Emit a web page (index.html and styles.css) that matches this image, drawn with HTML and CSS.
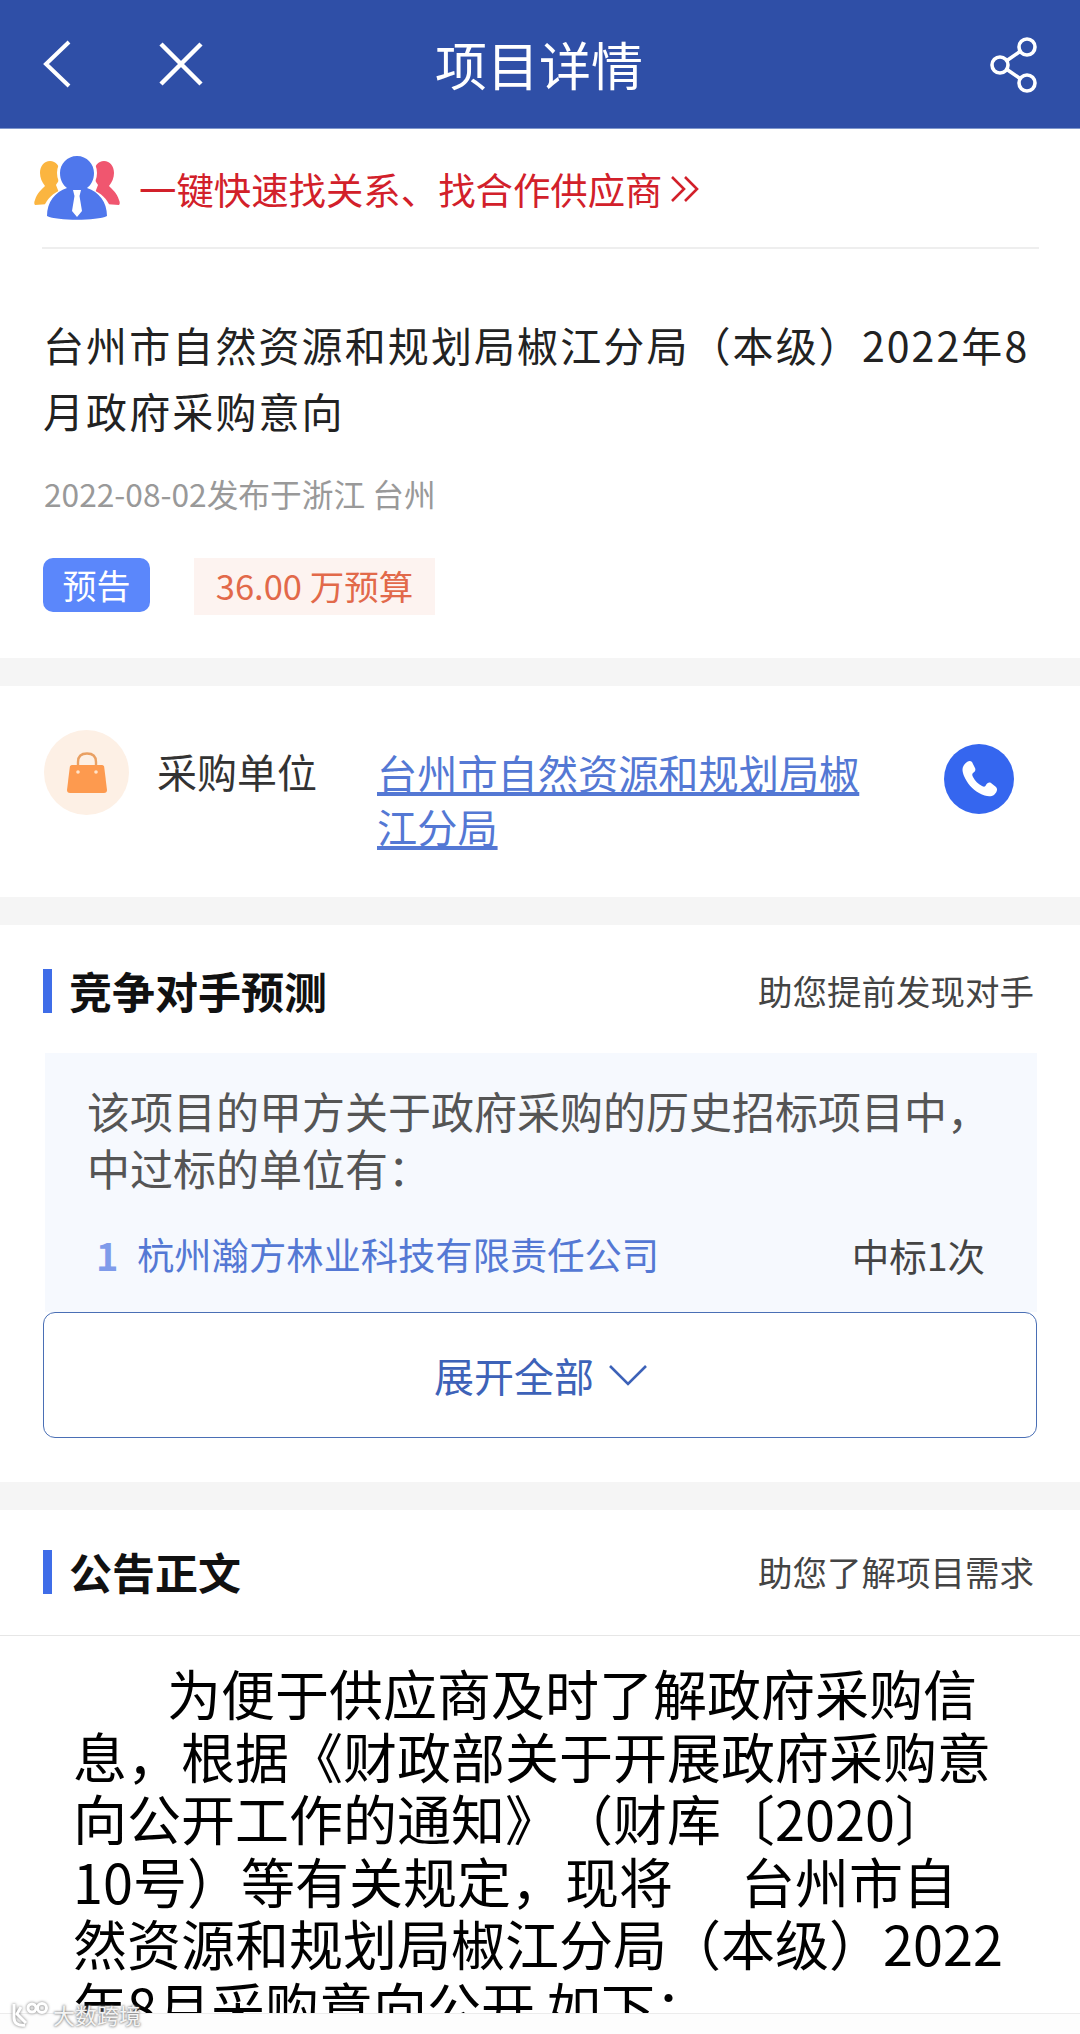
FILE: index.html
```html
<!DOCTYPE html>
<html lang="zh-CN">
<head>
  <meta charset="UTF-8">
  <meta name="viewport" content="width=device-width, initial-scale=1.0">
  <title>项目详情</title>
  <link rel="stylesheet" href="styles.css">
</head>
<body>

  <div class="page">
    <!-- Top bar -->
    <header class="topbar">
      <div class="topbar-left">
        <svg class="icon-back" viewBox="0 0 28 48" width="28" height="48"><path d="M26 2 L3 24 L26 46" fill="none" stroke="#fff" stroke-width="4"/></svg>
        <svg class="icon-close" viewBox="0 0 44 44" width="44" height="44"><path d="M2 2 L42 42 M42 2 L2 42" fill="none" stroke="#fff" stroke-width="4.5"/></svg>
      </div>
      <div class="topbar-title">项目详情</div>
      <svg class="icon-share" viewBox="0 0 50 56" width="50" height="56"><g fill="none" stroke="#fff" stroke-width="3.6"><circle cx="38" cy="10" r="8"/><circle cx="11" cy="28" r="8"/><circle cx="38" cy="46" r="8"/><path d="M31 14.5 L18 23.5 M18 32.5 L31 41.5"/></g></svg>
    </header>

    <main class="content">
      <!-- Promo and project info -->
      <section class="panel info-panel">
        <div class="promo">
          <svg class="icon-people" viewBox="0 0 90 68" width="90" height="68">
            <path d="M17 6 C23 6 27 11 27 18 C27 24 25 27 23 30 L30 48 L2 50 C1 49 1 47 2 45 C4 38 9 34 12 31 C9 27 7 23 7 18 C7 11 11 6 17 6 Z" fill="#fbb540"/>
            <path d="M71 6 C65 6 61 11 61 18 C61 24 63 27 65 30 L58 48 L86 50 C87 49 87 47 86 45 C84 38 79 34 76 31 C79 27 81 23 81 18 C81 11 77 6 71 6 Z" fill="#f0566f"/>
            <ellipse cx="44" cy="18" rx="20" ry="20" fill="#fff"/>
            <path d="M8 66 C8 46 22 32 44 32 C66 32 80 46 80 66 Z" fill="#fff"/>
            <path d="M44 1 C54 1 61 9 61 18 C61 25 58 30 54 33 C66 37 74 47 74 61 C64 66 24 66 14 61 C14 47 22 37 34 33 C30 30 27 25 27 18 C27 9 34 1 44 1 Z" fill="#4f77ec"/>
            <path d="M40 35 H48 L46.5 41 L49 56 L44 62 L39 56 L41.5 41 Z" fill="#fff"/>
          </svg>
          <span class="promo-text">一键快速找关系、找合作供应商</span>
          <svg class="icon-more" viewBox="0 0 32 30" width="32" height="30"><path d="M3 3 L15 15 L3 27 M16 3 L28 15 L16 27" fill="none" stroke="#d2202a" stroke-width="2.6"/></svg>
        </div>
        <h1 class="project-title">台州市自然资源和规划局椒江分局（本级）2022年8月政府采购意向</h1>
        <div class="project-date">2022-08-02发布于浙江 台州</div>
        <div class="tags">
          <span class="tag-notice">预告</span>
          <span class="tag-budget">36.00 万预算</span>
        </div>
      </section>

      <!-- Buyer -->
      <section class="panel buyer-panel">
        <div class="buyer-icon">
          <svg viewBox="0 0 42 42" width="42" height="42">
            <path d="M12 14 V10 C12 4 16 1.5 21 1.5 C26 1.5 30 4 30 10 V14" fill="none" stroke="#e9a063" stroke-width="2.4"/>
            <path d="M6 13 H36 C37.5 13 38 14 38.2 15 L41 38 C41 40 40 41 38 41 H4 C2 41 1 40 1 38 L3.8 15 C4 14 4.5 13 6 13 Z" fill="#fd9a4f"/>
            <circle cx="12" cy="20" r="1.8" fill="#ffe3c9"/>
            <circle cx="30" cy="20" r="1.8" fill="#ffe3c9"/>
          </svg>
        </div>
        <div class="buyer-label">采购单位</div>
        <a class="buyer-name">台州市自然资源和规划局椒江分局</a>
        <div class="phone-btn">
          <svg viewBox="0 0 40 40" width="40" height="40"><path d="M5 6 C8 2 11 1 13 3 L16 9 C17 11 16 13 14 14 C13 15 13 16 14 18 C16 22 19 25 23 27 C25 28 26 28 27 26 C28 24 30 23 32 24 L37 28 C39 30 38 33 35 36 C32 38 27 38 20 34 C13 30 8 24 5 17 C3 12 3 9 5 6 Z" fill="#fff"/></svg>
        </div>
      </section>

      <!-- Competitors -->
      <section class="panel rival-panel">
        <div class="section-head">
          <h2 class="section-title">竞争对手预测</h2>
          <span class="section-note">助您提前发现对手</span>
        </div>
        <div class="rival-card">
          <p class="rival-intro">该项目的甲方关于政府采购的历史招标项目中，中过标的单位有：</p>
          <div class="rival-row">
            <span class="rival-rank">1</span>
            <span class="rival-name">杭州瀚方林业科技有限责任公司</span>
            <span class="rival-count">中标1次</span>
          </div>
        </div>
        <div class="expand-btn">
          <span>展开全部</span>
          <svg viewBox="0 0 40 22" width="40" height="22"><path d="M2 2 L20 20 L38 2" fill="none" stroke="#3d62b8" stroke-width="2.6"/></svg>
        </div>
      </section>

      <!-- Notice body -->
      <section class="panel notice-panel">
        <div class="section-head notice-head">
          <h2 class="section-title">公告正文</h2>
          <span class="section-note">助您了解项目需求</span>
        </div>
        <div class="notice-body">为便于供应商及时了解政府采购信息，根据《财政部关于开展政府采购意向公开工作的通知》（财库〔2020〕<span class="no-break">10号</span>）等有关规定，现将<span class="text-gap"></span>台州市自然资源和规划局椒江分局（本级）2022年8月采购意向公开 如下：</div>
      </section>
    </main>

    <div class="bottom-strip"></div>
  </div>

  <!-- Screenshot watermark -->
  <div class="watermark">
    <svg viewBox="0 0 38 26" width="38" height="26"><g fill="none" stroke="#fff" stroke-width="3"><path d="M4 3 V17 C4 22 8 25 15 24"/><path d="M11 6 L7 13 L16 22"/><circle cx="22" cy="7" r="4"/><circle cx="32" cy="7" r="4.5"/></g></svg>
    <span>大数跨境</span>
  </div>

</body>
</html>
```

FILE: styles.css
```css
* {
  box-sizing: border-box;
}
html, body {
  margin: 0;
  height: 2034px;
  overflow: hidden;
}
body {
  font-family: "Noto Sans CJK SC", "Noto Sans", sans-serif;
  background: #f5f5f5;
  color: #111;
  text-spacing-trim: space-all;
}
.page {
  height: 2034px;
  display: flex;
  flex-direction: column;
}

/* Top bar */
.topbar {
  flex: none;
  height: 129px;
  background: #2f4fa7;
  border-bottom: 1px solid #7f97cc;
  display: flex;
  align-items: center;
  justify-content: space-between;
  padding: 0 41px 0 43px;
  position: relative;
}
.topbar-left {
  display: flex;
  align-items: center;
  gap: 88px;
}
.topbar-title {
  position: absolute;
  left: 0;
  right: 2px;
  text-align: center;
  color: #fff;
  font-size: 52px;
  line-height: 126px;
}
.icon-share {
  margin-top: 2px;
}

/* Panels */
.content {
  flex: 1;
  min-height: 0;
  overflow: hidden;
}
.panel {
  background: #fff;
  margin-bottom: 28px;
}
.info-panel {
  height: 529px;
  padding: 0 41px 0 42px;
}
.promo {
  height: 120px;
  border-bottom: 2px solid #eee;
  display: flex;
  align-items: center;
  padding-top: 2px;
}
.promo .icon-people {
  margin: 0 16px 0 -9px;
}
.promo-text {
  color: #d2202a;
  font-size: 37.4px;
}
.icon-more {
  margin-left: 7px;
}
.project-title {
  margin: 62px 0 0 1px;
  font-size: 41px;
  font-weight: 400;
  line-height: 66px;
  color: #222;
  letter-spacing: 2.1px;
}
.project-date {
  margin: 30px 0 0 2px;
  font-size: 31.7px;
  line-height: 40px;
  color: #999;
}
.tags {
  margin: 45px 0 0 1px;
  display: flex;
  align-items: flex-start;
  gap: 44px;
}
.tag-notice {
  width: 107px;
  height: 54px;
  border-radius: 10px;
  background: #5b87fb;
  color: #fff;
  font-size: 34px;
  line-height: 54px;
  text-align: center;
}
.tag-budget {
  width: 241px;
  height: 57px;
  background: #fdf3f0;
  color: #e2694a;
  font-size: 34.5px;
  line-height: 54px;
  text-align: center;
}

/* Buyer */
.buyer-panel {
  height: 211px;
  padding: 44px 0 0 44px;
  display: flex;
  align-items: flex-start;
}
.buyer-icon {
  flex: none;
  width: 85px;
  height: 85px;
  border-radius: 50%;
  background: #fdf0e5;
  display: flex;
  align-items: center;
  justify-content: center;
}
.buyer-label {
  flex: none;
  width: 220px;
  margin: 14px 0 0 28px;
  font-size: 40px;
  line-height: 54px;
  color: #333;
}
.buyer-name {
  flex: none;
  width: 491px;
  margin-top: 15px;
  font-size: 40.2px;
  line-height: 54px;
  color: #5478d4;
  text-decoration: underline;
}
.phone-btn {
  flex: none;
  width: 70px;
  height: 70px;
  margin: 14px 0 0 76px;
  border-radius: 50%;
  background: #3566ef;
  display: flex;
  align-items: center;
  justify-content: center;
}

/* Section header */
.section-head {
  display: flex;
  align-items: center;
  justify-content: space-between;
  height: 44px;
  padding: 0 46px 2px 0;
  border-left: 9px solid #3f6de8;
  margin-left: 43px;
}
.section-title {
  margin: 0 0 0 17px;
  font-size: 43px;
  font-weight: 700;
  color: #111;
}
.section-note {
  font-size: 34.5px;
  color: #444;
}

/* Competitors */
.rival-panel {
  height: 557px;
  padding-top: 44px;
}
.rival-card {
  margin: 40px 43px 0 45px;
  height: 259px;
  background: #f6f9fe;
  padding: 29px 30px 0 42px;
}
.rival-intro {
  margin: 0;
  font-size: 43px;
  line-height: 57px;
  color: #555;
}
.rival-row {
  margin-top: 30px;
  display: flex;
  align-items: center;
  height: 56px;
}
.rival-rank {
  flex: none;
  width: 50px;
  padding-left: 9px;
  font-size: 38px;
  font-weight: 700;
  color: #7f9bea;
}
.rival-name {
  flex: 1;
  font-size: 37.3px;
  color: #5478d4;
}
.rival-count {
  font-size: 37.5px;
  color: #444;
  margin-right: 22px;
}
.expand-btn {
  margin: 0 43px;
  height: 126px;
  background: #fff;
  border: 1.5px solid #4a6fb5;
  border-radius: 12px;
  display: flex;
  align-items: center;
  justify-content: center;
  gap: 14px;
  padding-left: 2px;
  font-size: 40px;
  color: #3d62b8;
}

/* Notice */
.notice-panel {
  margin-bottom: 0;
  padding-top: 40px;
}
.notice-head {
  margin-bottom: 41px;
}
.notice-body {
  border-top: 1px solid #e6e6e6;
  padding: 26px 75px 0 73px;
  font-size: 54px;
  line-height: 62.6px;
  text-indent: 94px;
  color: #000;
}
.no-break {
  display: inline-block;
  text-indent: 0;
}
.text-gap {
  display: inline-block;
  width: 68px;
}

/* Bottom */
.bottom-strip {
  flex: none;
  height: 21px;
  background: #fdfdfd;
  border-top: 1px solid #ececec;
}
.watermark {
  position: absolute;
  left: 10px;
  top: 2001px;
  display: flex;
  align-items: center;
  gap: 5px;
  font-size: 22px;
  line-height: 26px;
  color: #f4f4f4;
  text-shadow: 0 0 3px #777, 0 0 2px #999;
}
.watermark svg {
  filter: drop-shadow(0 0 1.5px #777);
}
```
